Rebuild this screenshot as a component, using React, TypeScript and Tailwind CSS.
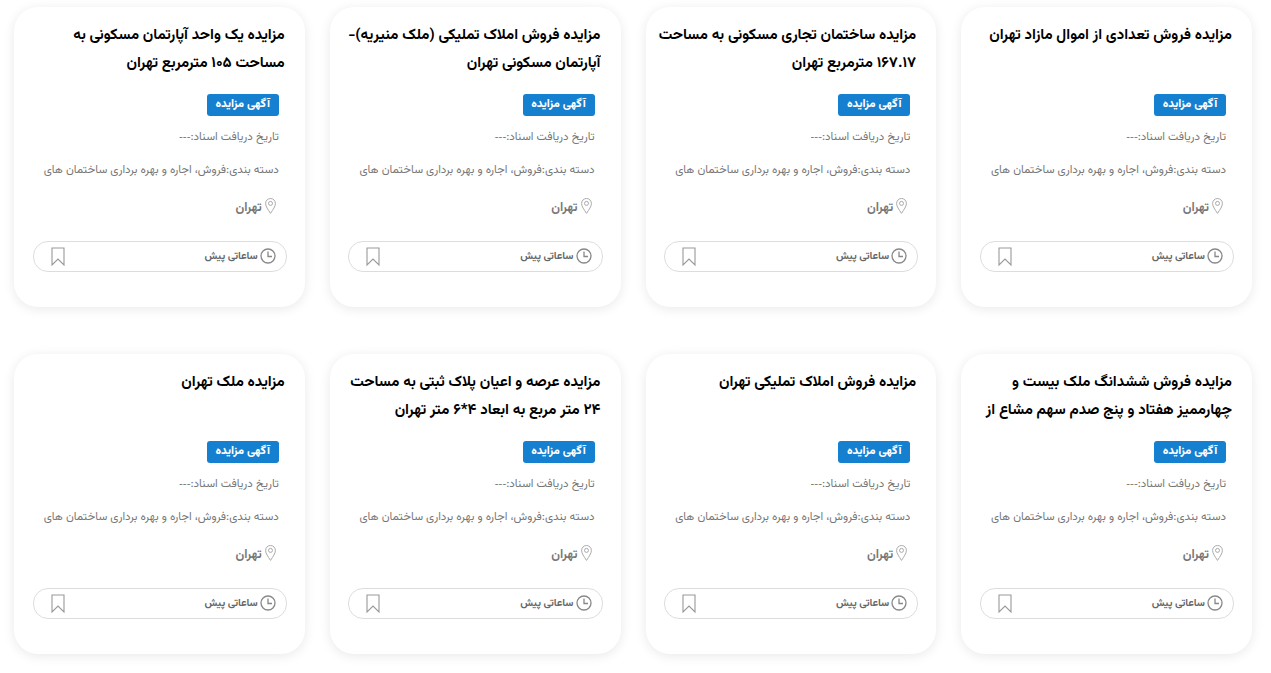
const cards = [
  "مزایده فروش تعدادی از اموال مازاد تهران",
  "مزایده ساختمان تجاری مسکونی به مساحت ۱۶۷.۱۷ مترمربع تهران",
  "مزایده فروش املاک تملیکی (ملک منیریه)-آپارتمان مسکونی تهران",
  "مزایده یک واحد آپارتمان مسکونی به مساحت ۱۰۵ مترمربع تهران",
  "مزایده فروش ششدانگ ملک بیست و چهارممیز هفتاد و پنج صدم سهم مشاع از",
  "مزایده فروش املاک تملیکی تهران",
  "مزایده عرصه و اعیان پلاک ثبتی به مساحت ۲۴ متر مربع به ابعاد ۴*۶ متر تهران",
  "مزایده ملک تهران",
];

function Card({ title }: { title: string }) {
  return (
    <div className="h-[300px] rounded-[24px] bg-white pt-[13px] pr-[20px] pl-[18.7px] shadow-[0_2px_12px_rgba(0,0,0,0.09)]">
      <h3 className="-ml-[11px] mt-[2px] h-[56px] overflow-hidden text-[15px] font-bold leading-[28px] text-black">{title}</h3>
      <div className="mt-[16px] mr-[6px] flex">
        <span className="flex h-[22px] w-[72px] items-center justify-center rounded-[3px] bg-[#1580d0] text-[11.5px] font-extrabold text-white">آگهی مزایده</span>
      </div>
      <p className="mt-[11px] mr-[6px] h-[18px] text-[11.5px] leading-[18px] text-[#777]">تاریخ دریافت اسناد:<span className="font-['Liberation_Sans']">---</span></p>
      <p className="mt-[16px] mr-[6px] whitespace-nowrap text-[11.5px] leading-[18px] text-[#777]">دسته بندی:فروش، اجاره و بهره برداری ساختمان های</p>
      <div className="mt-[18px] mr-[9px] flex h-[22px] items-center gap-[3px] text-[#777]">
        <svg width="11" height="16" viewBox="0 0 11 16" fill="none" stroke="#aaa" strokeWidth="1" className="-mt-[4px]">
          <path d="M5.5 15.4C3 11.4.6 8.6.6 5.4a4.9 4.9 0 0 1 9.8 0C10.4 8.6 8 11.4 5.5 15.4Z" />
          <circle cx="5.5" cy="5.4" r="2" />
        </svg>
        <span className="text-[12.5px] font-bold">تهران</span>
      </div>
      <div className="mt-[22px] -mr-[2px] flex h-[31px] items-center justify-between rounded-[15px] border border-[#ddd] pr-[10px] pl-[17px]">
        <div className="flex items-center gap-[2px]">
          <svg width="16" height="16" viewBox="0 0 16 16" fill="none" stroke="#888" strokeWidth="1.3" className="-mt-[2px]">
            <circle cx="8" cy="8" r="7" />
            <path d="M8 3.5V8.5H12" />
          </svg>
          <span className="mt-[1px] text-[10.5px] font-bold text-[#666]">ساعاتی پیش</span>
        </div>
        <svg width="14" height="19" viewBox="0 0 14 19" fill="none" stroke="#999" strokeWidth="1.1">
          <path d="M1 1H13V18L7 12L1 18Z" />
        </svg>
      </div>
    </div>
  );
}

export default function App() {
  return (
    <div dir="rtl" className="grid min-h-[673px] grid-cols-4 content-start gap-x-[25px] gap-y-[47px] bg-white pt-[7px] pr-[19px] pl-[14px] font-['Vazirmatn','DejaVu_Sans',sans-serif]">
      {cards.map((t) => (
        <Card key={t} title={t} />
      ))}
    </div>
  );
}
